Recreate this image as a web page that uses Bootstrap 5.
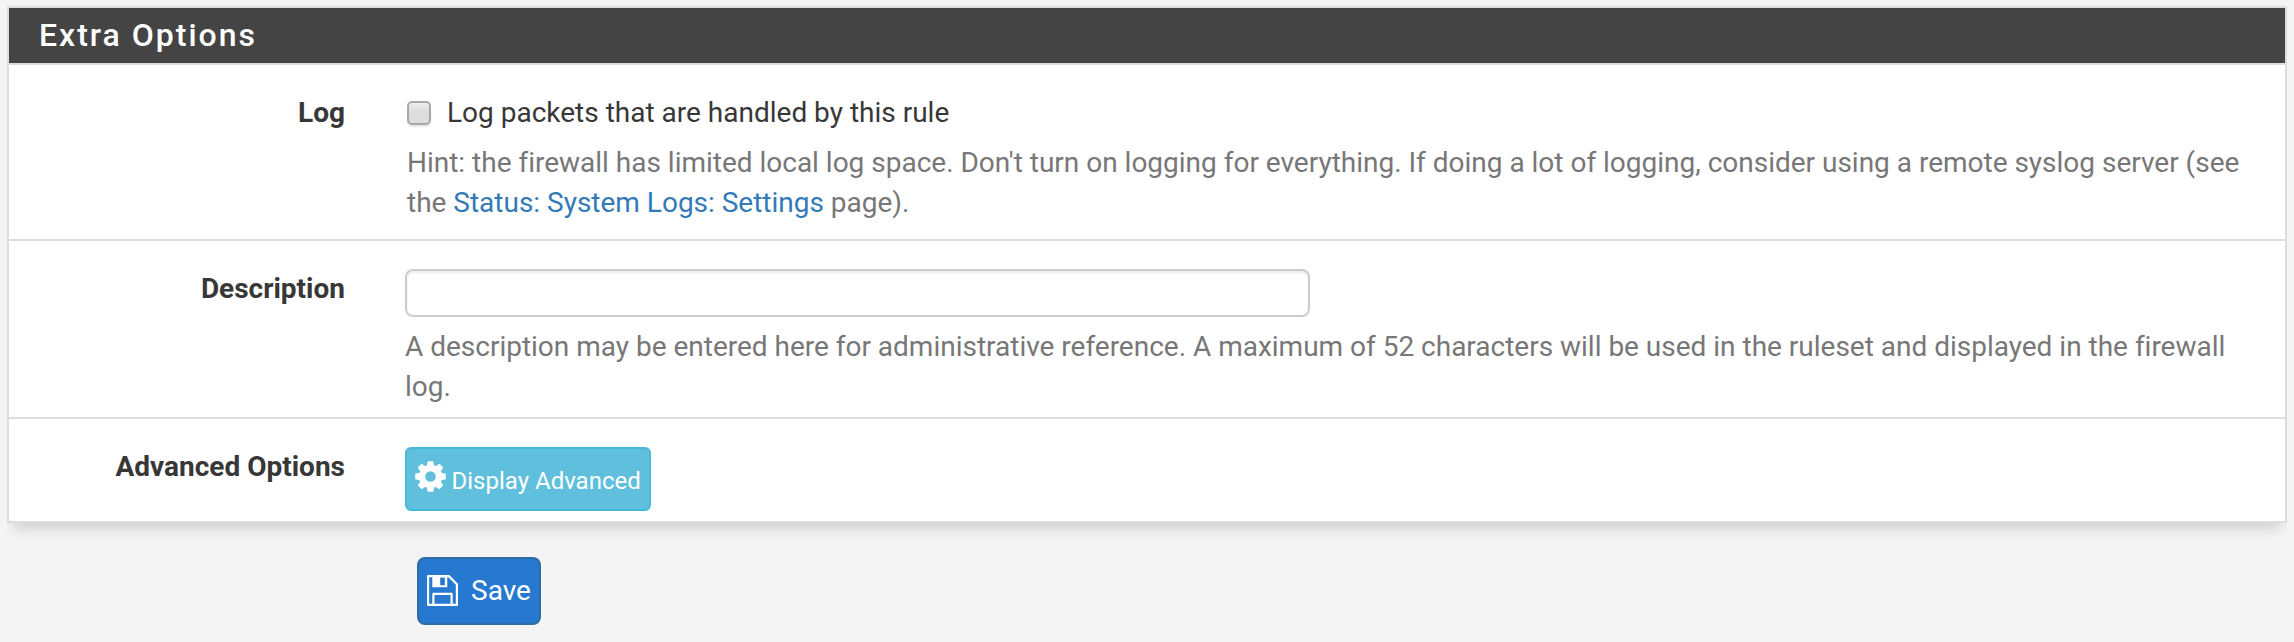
<!DOCTYPE html>
<html lang="en">
<head>
<meta charset="utf-8">
<meta name="viewport" content="width=device-width, initial-scale=1">
<title>Extra Options</title>
<link rel="stylesheet" href="https://cdn.jsdelivr.net/npm/bootstrap@5.3.0/dist/css/bootstrap.min.css">
<style>
body{background:#f4f4f4;font-family:Roboto,"Liberation Sans",sans-serif;font-size:28px;line-height:40px;color:#373737;height:642px;overflow:hidden}
.page{padding:6px 7px 0}
.panel{--bs-card-border-width:0;--bs-card-border-radius:0;border:2px solid #ddd;background:#fff;box-shadow:0 12px 12px -6px rgba(0,0,0,.14);clip-path:inset(0 0 -24px 0)}
.panel-title{height:57px;background:#444;border-bottom:2px solid #ddd;color:#fff;font-size:32px;font-weight:500;line-height:36px;letter-spacing:2px;padding:9px 30px 0}
.opt{border-bottom:2px solid #ddd;padding-top:28px}
.opt:last-child{border-bottom:0}
.opt-log{height:176px}.opt-desc{height:178px}.opt-adv{height:102px}
.opt-label{width:336px;font-weight:700;text-align:right;flex:none}
.opt-body{padding-left:60px;flex:1;white-space:nowrap}
.hint{color:#777;margin-top:10px;letter-spacing:-.008px}
.hint a{color:#337ab7;text-decoration:none}
.log-body{padding-left:62px}
.tick{appearance:none;width:24px;height:24px;margin:8px 16px 0 0;border:2px solid #a8a8a8;border-radius:5px;background:linear-gradient(#eee,#dcdcdc 45%,#ddd);box-shadow:0 2px 1px #e8e8e8;flex:none}
.desc-input{width:905px;height:48px;border:2px solid #ccc;border-radius:8px;box-shadow:inset 0 2px 2px rgba(0,0,0,.075);padding:4px 12px}
.btn-adv{width:246px;height:64px;background:#60bfdc;border:2px solid #46b8da;border-radius:6px;color:#fff;font-size:24px;line-height:36px;padding:0 8px}
.btn-adv svg{width:31px;height:31px;margin:-5px 5.500px 0 0;flex:none}
.btn-adv span{padding-top:4px}
.btn-save{width:124px;height:68px;margin:34px 0 0 410px;background:#2678d0;border:2px solid #2e6da4;border-radius:8px;color:#fff;font-size:28px;line-height:40px;padding:0 8px}
.btn-save svg{width:31px;height:31px;margin:-2px 13px 0 0;flex:none}
</style>
</head>
<body>
<main class="page">
  <section class="panel card">
    <h2 class="panel-title m-0">Extra Options</h2>
    <div class="opt opt-log d-flex">
      <label class="opt-label" for="log">Log</label>
      <div class="opt-body log-body">
        <label class="d-flex"><input class="tick" type="checkbox" id="log">Log packets that are handled by this rule</label>
        <div class="hint">Hint: the firewall has limited local log space. Don't turn on logging for everything. If doing a lot of logging, consider using a remote syslog server (see<br>the <a href="#">Status: System Logs: Settings</a> page).</div>
      </div>
    </div>
    <div class="opt opt-desc d-flex">
      <label class="opt-label" for="descr">Description</label>
      <div class="opt-body">
        <input class="desc-input form-control" type="text" id="descr">
        <div class="hint">A description may be entered here for administrative reference. A maximum of 52 characters will be used in the ruleset and displayed in the firewall<br>log.</div>
      </div>
    </div>
    <div class="opt opt-adv d-flex">
      <div class="opt-label">Advanced Options</div>
      <div class="opt-body">
        <button class="btn btn-adv d-flex align-items-center" type="button">
          <svg viewBox="-15.500 -15.500 31 31" aria-hidden="true"><g fill="#fff"><path id="tooth" d="M-2.700-15.300h5.400L4.200-9h-8.400zM-2.700 15.300h5.400L4.200 9h-8.400z"/><use href="#tooth" transform="rotate(45)"/><use href="#tooth" transform="rotate(90)"/><use href="#tooth" transform="rotate(135)"/></g><circle r="8.400" fill="none" stroke="#fff" stroke-width="6.200"/></svg>
          <span>Display Advanced</span>
        </button>
      </div>
    </div>
  </section>
  <button class="btn btn-save d-flex align-items-center" type="submit">
    <svg viewBox="0 0 31 31" aria-hidden="true"><path fill="none" stroke="#fff" stroke-width="2.200" stroke-linejoin="round" d="M1.100 1.100h20.700l8.100 8.100v20.700H1.100zM6.400 29.500V18.800h18.200v10.700"/><path fill="#fff" fill-rule="evenodd" d="M5.300 1h15v11.300h-15zM13.200 2.400v7.800h4.600V2.400z"/></svg>
    <span>Save</span>
  </button>
</main>
<script src="https://cdn.jsdelivr.net/npm/bootstrap@5.3.0/dist/js/bootstrap.bundle.min.js"></script>
</body>
</html>
